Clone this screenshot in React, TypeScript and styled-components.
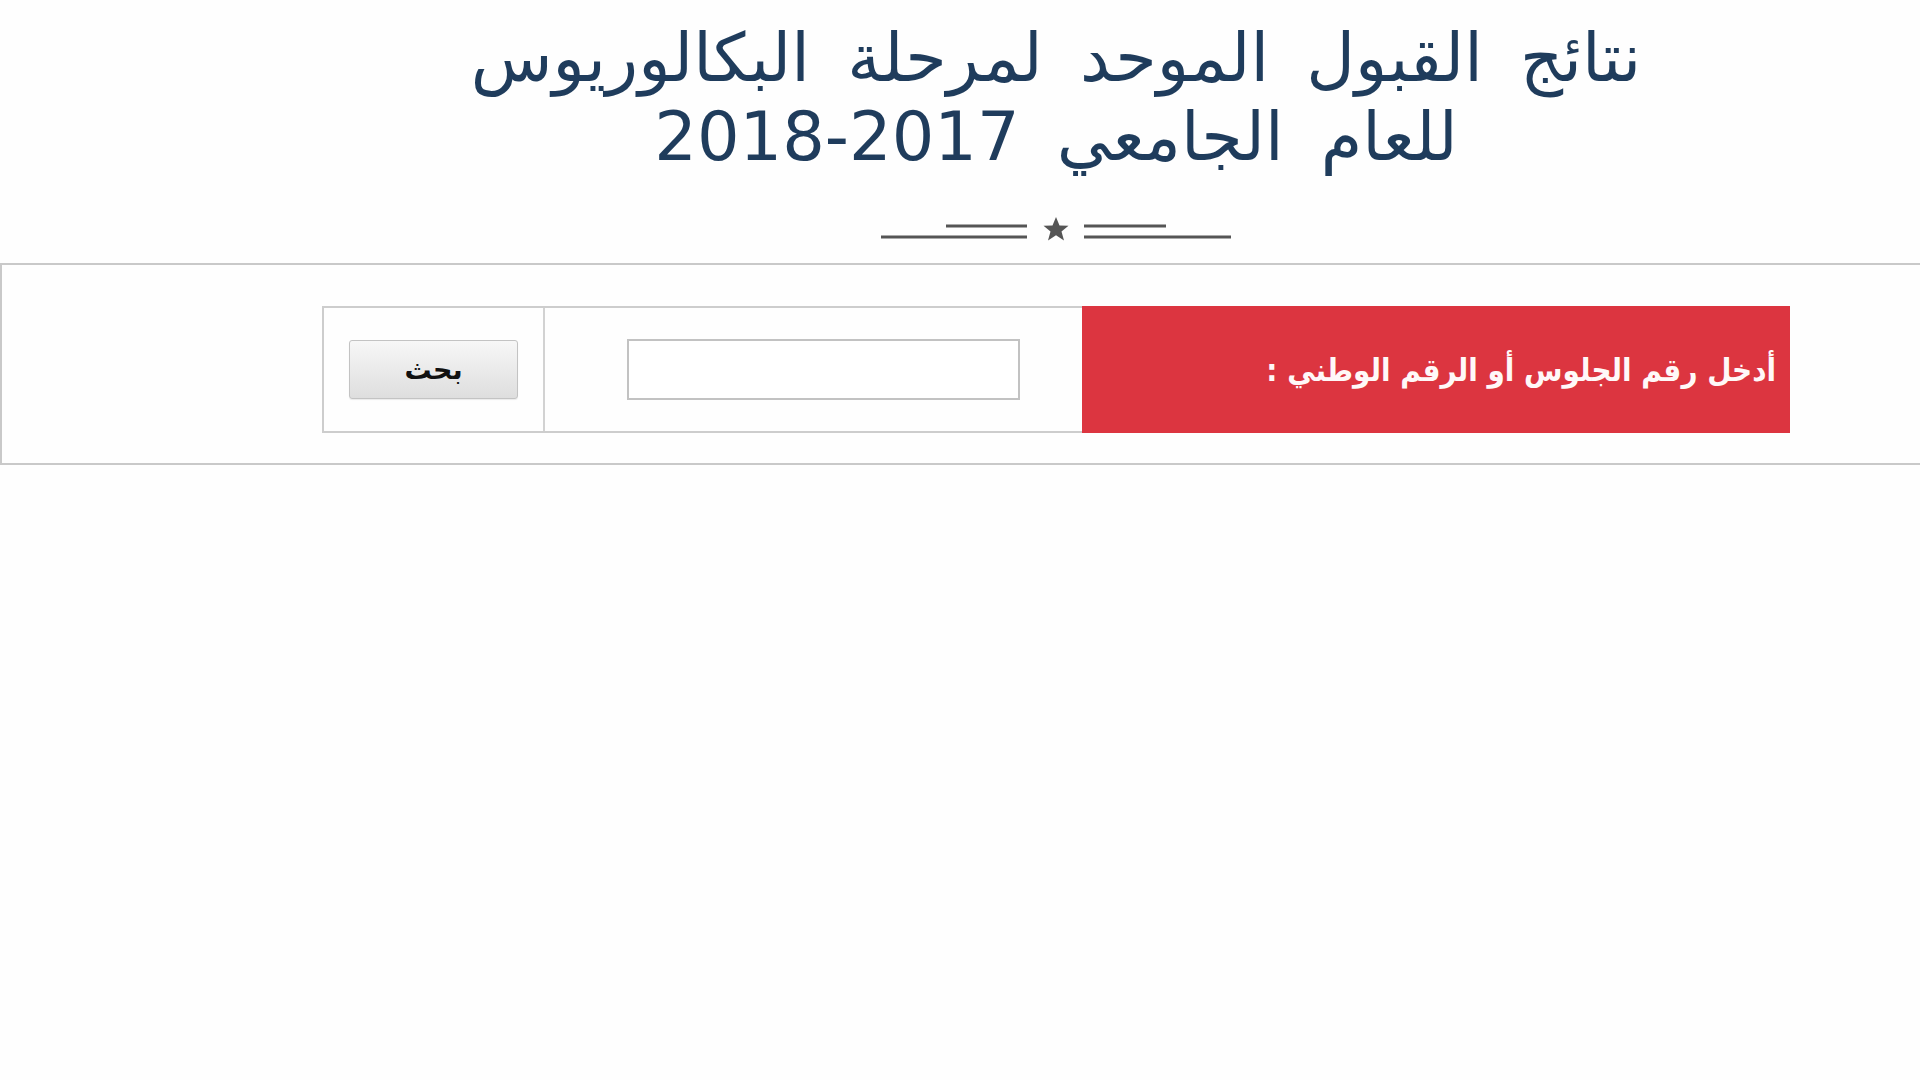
import React from "react";
import styled, { createGlobalStyle } from "styled-components";

const GlobalStyle = createGlobalStyle`
  html, body {
    margin: 0;
    padding: 0;
    background: #ffffff;
    overflow: hidden;
  }
  body {
    font-family: "DejaVu Sans", "Noto Sans", sans-serif;
  }
`;

const Page = styled.div`
  width: 2112px;
  direction: rtl;
  background: #fefefe;
  min-height: 1080px;
`;

const Header = styled.header`
  display: flex;
  flex-direction: column;
  align-items: center;
  padding-top: 19px;
`;

const Title = styled.h1`
  margin: 0;
  font-family: "DejaVu Sans", sans-serif;
  font-weight: normal;
  font-size: 67px;
  line-height: 79px;
  word-spacing: 16px;
  color: #1f3c5c;
  text-align: center;
`;

const Divider = styled.div`
  margin-top: 39px;
  height: 28px;
  display: flex;
  justify-content: center;
`;

const SearchBox = styled.section`
  margin-top: 19px;
  border: 2px solid #c9c9c9;
  padding: 41px 0 30px;
  display: flex;
  justify-content: center;
`;

const FormTable = styled.div`
  width: 1468px;
  height: 127px;
  box-sizing: border-box;
  border: 2px solid #cdcdcd;
  display: flex;
  flex-direction: row;
`;

const LabelCell = styled.div`
  width: 708px;
  flex-shrink: 0;
  margin: -2px -2px -2px 0;
  background: #dc3540;
  color: #fff8f8;
  display: flex;
  align-items: center;
  padding-right: 14px;
  box-sizing: border-box;
  font-family: "DejaVu Sans Condensed", "DejaVu Sans", sans-serif;
  font-weight: bold;
  font-size: 31px;
`;

const InputCell = styled.div`
  width: 537px;
  flex-shrink: 0;
  display: flex;
  align-items: center;
  justify-content: flex-start;
  padding-right: 62px;
  box-sizing: border-box;
`;

const SeatInput = styled.input`
  width: 393px;
  height: 61px;
  box-sizing: border-box;
  border: 2px solid #c2c2c2;
  background: #ffffff;
  outline: none;
  font-size: 20px;
`;

const ButtonCell = styled.div`
  flex: 1;
  border-right: 2px solid #d2d2d2;
  display: flex;
  align-items: center;
  justify-content: center;
`;

const SearchButton = styled.button`
  width: 169px;
  height: 59px;
  border: 1px solid #c3c3c3;
  border-radius: 3px;
  background: linear-gradient(#f7f7f7, #dedede);
  box-shadow: 0 1px 1px rgba(0, 0, 0, 0.08);
  font-family: "DejaVu Sans", sans-serif;
  font-weight: bold;
  font-size: 27px;
  color: #111;
  cursor: pointer;
  padding: 0;
`;

const Ornament: React.FC = () => (
  <svg width="356" height="28" viewBox="0 0 356 28" style={{ direction: "ltr" }}>
    <g stroke="#555" strokeWidth="3">
      <line x1="68" y1="10" x2="149" y2="10" />
      <line x1="3" y1="21" x2="149" y2="21" />
      <line x1="206" y1="10" x2="288" y2="10" />
      <line x1="206" y1="21" x2="353" y2="21" />
    </g>
    <polygon
      fill="#555"
      points="178,1 181.5,9.5 190.5,9.8 183.5,15.5 186,24.5 178,19.3 170,24.5 172.5,15.5 165.5,9.8 174.5,9.5"
    />
  </svg>
);

export default function App() {
  return (
    <>
      <GlobalStyle />
      <Page dir="rtl">
        <Header>
          <Title>
            نتائج القبول الموحد لمرحلة البكالوريوس
            <br />
            للعام الجامعي 2017-2018
          </Title>
          <Divider>
            <Ornament />
          </Divider>
        </Header>
        <SearchBox>
          <FormTable>
            <LabelCell>أدخل رقم الجلوس أو الرقم الوطني :</LabelCell>
            <InputCell>
              <SeatInput type="text" />
            </InputCell>
            <ButtonCell>
              <SearchButton type="button">بحث</SearchButton>
            </ButtonCell>
          </FormTable>
        </SearchBox>
      </Page>
    </>
  );
}
